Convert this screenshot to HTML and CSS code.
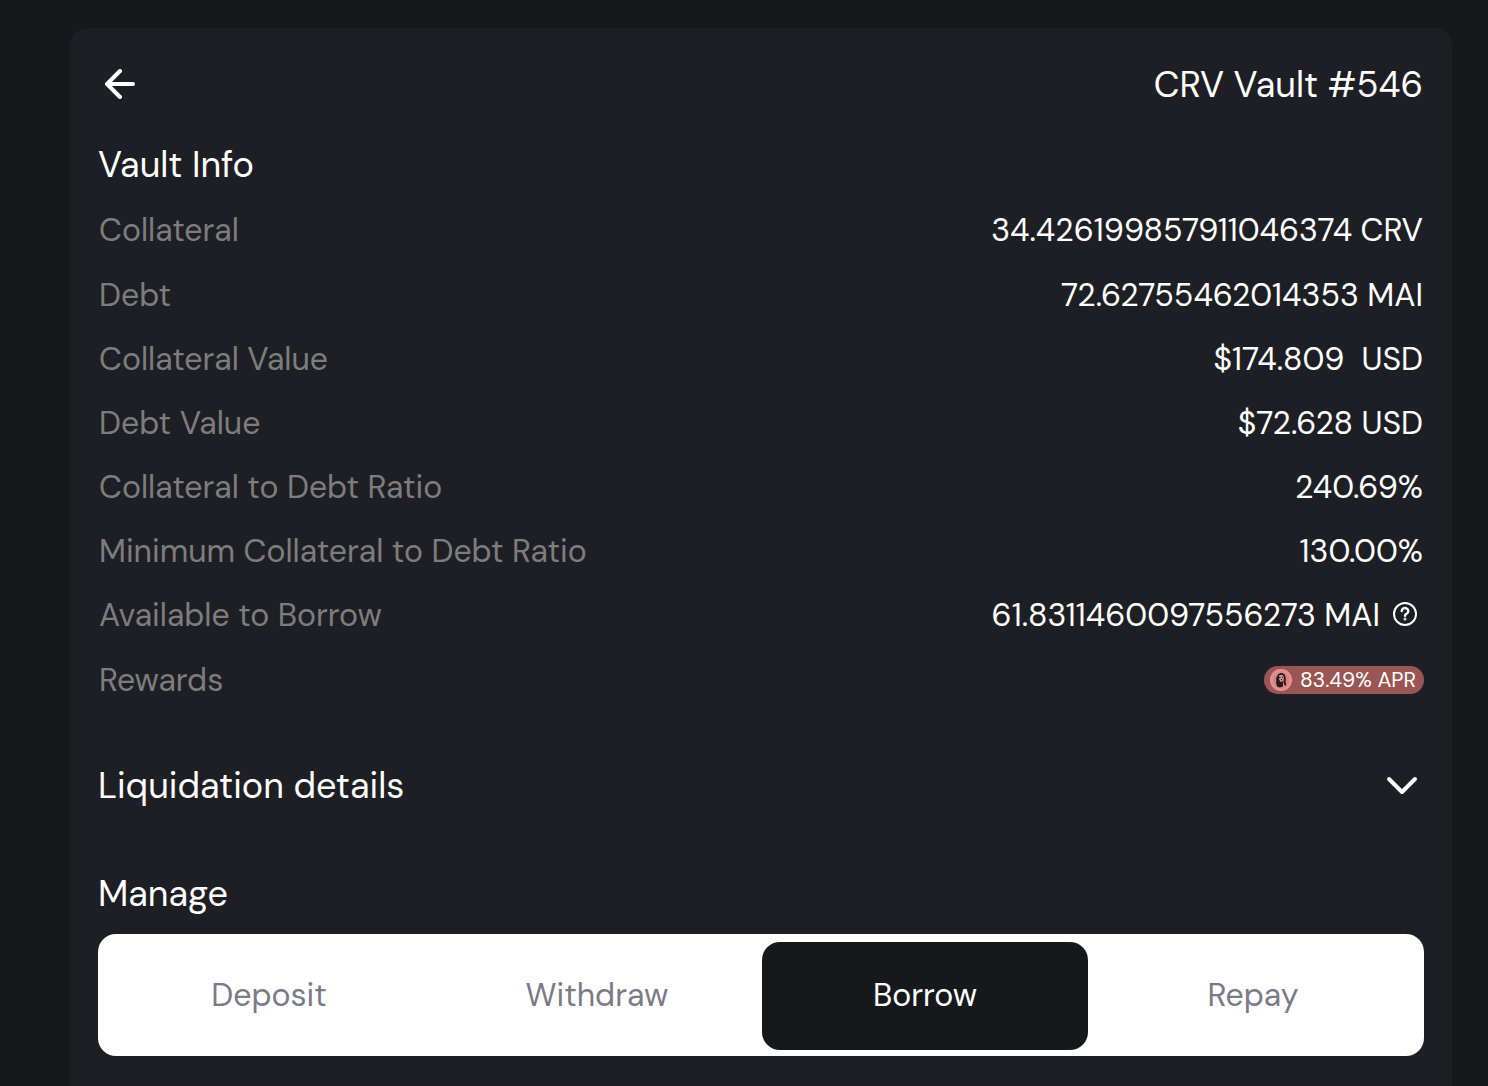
FILE: index.html
```html
<!DOCTYPE html>
<html lang="en">
<head>
<meta charset="utf-8">
<meta name="viewport" content="width=device-width, initial-scale=1">
<title>CRV Vault #546</title>
<link rel="stylesheet" href="styles.css">
</head>
<body>
<main class="card">
  <header class="card-header">
    <button class="icon-button" type="button" aria-label="Back">
      <svg width="32" height="32" viewBox="0 0 32 32" fill="none" stroke="currentColor" stroke-width="4" stroke-linecap="round" stroke-linejoin="round"><path d="M29 15H4M16 2 3 15l13 13"/></svg>
    </button>
    <h1 class="title">CRV Vault #546</h1>
  </header>

  <section class="info">
    <h2 class="heading">Vault Info</h2>
    <dl class="rows">
      <div class="row row-tall"><dt>Collateral</dt><dd>34.426199857911046374 CRV</dd></div>
      <div class="row"><dt>Debt</dt><dd>72.62755462014353 MAI</dd></div>
      <div class="row"><dt>Collateral Value</dt><dd class="spaced">$174.809  USD</dd></div>
      <div class="row"><dt>Debt Value</dt><dd>$72.628 USD</dd></div>
      <div class="row"><dt>Collateral to Debt Ratio</dt><dd>240.69%</dd></div>
      <div class="row"><dt>Minimum Collateral to Debt Ratio</dt><dd>130.00%</dd></div>
      <div class="row">
        <dt>Available to Borrow</dt>
        <dd class="with-help">61.8311460097556273 MAI
          <button class="icon-button" type="button" aria-label="About the available amount">
            <svg width="26" height="26" viewBox="0 0 26 26" fill="none" stroke="currentColor" stroke-width="2" stroke-linecap="round" stroke-linejoin="round"><circle cx="13" cy="12" r="11"/><path stroke-width="2.400" d="M9.700 9a3.300 3 0 1 1 4.900 2.700c-1.100.6-1.600 1-1.600 2"/><circle cx="13" cy="17" r=".5"/></svg>
          </button>
        </dd>
      </div>
      <div class="row row-tall">
        <dt>Rewards</dt>
        <dd class="badge">
          <svg width="22" height="22" viewBox="0 0 22 22"><defs><radialGradient id="coin"><stop offset="0" stop-color="#ba7370"/><stop offset=".65" stop-color="#d98582"/><stop offset="1" stop-color="#ee9692"/></radialGradient></defs><circle cx="11" cy="11" r="11" fill="url(#coin)"/><path d="M8 5.500c2-2 5-2 6.500 0 1.500 2 1.500 5 1 7l1 4.500-2-1-1-3 .5-5-2-2.500-3 1v4l2 2h2v5l-3 1-3-1-1-4 .5-2-.5-2z" fill="#241c20"/><path d="M9 7l3-1 1.500 3-1 3-2.500 1z" fill="#d98b87"/><path d="M9 8.500h1.500M12 8.500h1M11 10.500h1" stroke="#241c20"/></svg>
          83.49% APR
        </dd>
      </div>
    </dl>
  </section>

  <button class="disclosure" type="button" aria-expanded="false">
    <span>Liquidation details</span>
    <svg width="32" height="22" viewBox="0 0 32 22" fill="none" stroke="currentColor" stroke-width="4" stroke-linecap="round" stroke-linejoin="round"><path d="M3 4l13 13L29 4"/></svg>
  </button>

  <section class="manage">
    <h2 class="heading">Manage</h2>
    <div class="tabs" role="tablist">
      <button class="tab" type="button" role="tab" aria-selected="false">Deposit</button>
      <button class="tab" type="button" role="tab" aria-selected="false">Withdraw</button>
      <button class="tab tab-active" type="button" role="tab" aria-selected="true">Borrow</button>
      <button class="tab" type="button" role="tab" aria-selected="false">Repay</button>
    </div>
  </section>
</main>
</body>
</html>
```
FILE: styles.css
```css
* {
  box-sizing: border-box;
}

body {
  margin: 0;
  min-height: 100vh;
  padding: 28px 36px 0 70px;
  display: flex;
  background: #17181c;
  color: #fff;
  font-family: "DM Sans", Inter, sans-serif;
  font-size: 32px;
  font-weight: 400;
  font-optical-sizing: none;
  line-height: 48px;
}

button {
  border: 0;
  padding: 0;
  background: none;
  color: inherit;
  font: inherit;
  font-optical-sizing: inherit;
  cursor: pointer;
}

svg {
  display: block;
  flex: none;
}

.card {
  flex: 1;
  min-width: 0;
  padding: 33px 28px 28px;
  border-radius: 18px 18px 0 0;
  background: #1e1f25;
}

.card-header {
  display: flex;
  align-items: center;
  justify-content: space-between;
  padding: 0 1px 0 6px;
}

.title,
.heading {
  margin: 0;
  font-size: 36px;
  font-weight: 400;
}

.info {
  margin-top: 32px;
}

.rows {
  display: grid;
  gap: 16px;
  margin: 16px 0 0;
}

.row {
  display: flex;
  align-items: center;
  justify-content: space-between;
  min-height: 48px;
}

.row-tall {
  min-height: 50px;
}

.row dt {
  padding-left: 1px;
  color: #7d7d7d;
}

.row dd {
  margin: 0;
  padding-right: 1px;
}

.row .spaced {
  white-space: pre;
}

.row .with-help {
  display: flex;
  align-items: center;
  gap: 12px;
  padding-right: 6px;
}

.row .badge {
  display: flex;
  align-items: center;
  gap: 8px;
  height: 28px;
  padding: 0 8px 0 6px;
  border-radius: 14px;
  background: #9a5655;
  font-size: 21px;
  line-height: 28px;
}

.disclosure {
  display: flex;
  align-items: center;
  justify-content: space-between;
  width: 100%;
  margin-top: 57px;
  padding-right: 6px;
  font-size: 36px;
}

.manage {
  margin-top: 60px;
}

.tabs {
  display: grid;
  grid-template-columns: repeat(4, 1fr);
  gap: 2px;
  margin-top: 16px;
  padding: 8px 8px 6px;
  border-radius: 18px;
  background: #fff;
}

.tab {
  height: 108px;
  padding-bottom: 2px;
  border-radius: 18px;
  color: #7c7a88;
}

.tab-active {
  background: #17181c;
  color: #fff;
}
```
